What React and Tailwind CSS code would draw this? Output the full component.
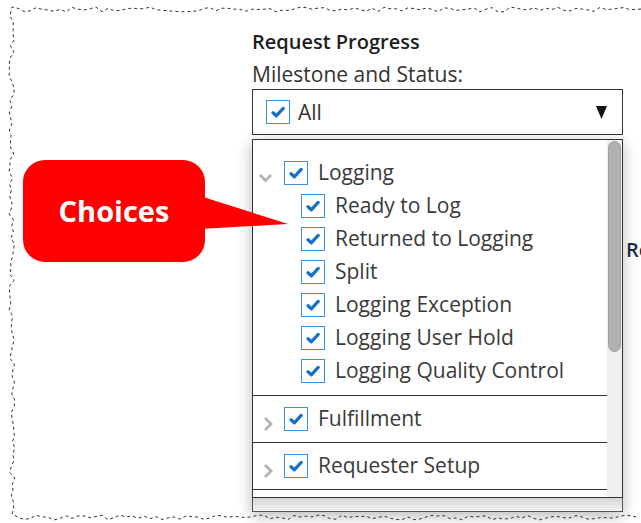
import React from "react";

// torn paper edge around the capture: jittered dashed line
function tornPath() {
  let seed = 7;
  const rnd = () => {
    seed = (seed * 9301 + 49297) % 233280;
    return seed / 233280;
  };
  let d = "M 641 9";
  for (let x = 636; x >= 12; x -= 6) d += ` L ${x} ${7 + rnd() * 5}`;
  for (let y = 16; y <= 514; y += 6) d += ` L ${9 + rnd() * 6} ${y}`;
  for (let x = 18; x <= 641; x += 6) d += ` L ${x} ${515 + rnd() * 5}`;
  return d;
}

function Check({ className = "" }) {
  return (
    <span className={`flex h-[24px] w-[24px] shrink-0 items-center justify-center border-[1.5px] border-[#3b90da] bg-white ${className}`}>
      <svg width="14" height="12" viewBox="0 0 14 12">
        <path d="M2 6.8 L5.3 9.8 L12.2 2.4" fill="none" stroke="#1570c8" strokeWidth="3.2" strokeLinecap="round" strokeLinejoin="round" />
      </svg>
    </span>
  );
}

function ChevronDown() {
  return (
    <svg width="15" height="10" viewBox="0 0 15 10" className="mt-[10px]">
      <path d="M2 2 L7.5 7.5 L13 2" fill="none" stroke="#b3b3b3" strokeWidth="2.8" />
    </svg>
  );
}

function ChevronRight() {
  return (
    <svg width="10" height="16" viewBox="0 0 10 16" className="mt-[9px]">
      <path d="M2 2 L8 8 L2 14" fill="none" stroke="#b3b3b3" strokeWidth="2.8" />
    </svg>
  );
}

const logging = [
  "Ready to Log",
  "Returned to Logging",
  "Split",
  "Logging Exception",
  "Logging User Hold",
  "Logging Quality Control",
];

export default function App() {
  return (
    <div className="relative h-[523px] w-[641px] overflow-hidden bg-white font-['Open_Sans',sans-serif]">
      <div className="flex">
        <div className="w-[252px] shrink-0" />

        <div className="w-[371px] shrink-0 pt-[29px]">
          <div className="text-[20px] font-semibold leading-[26px] text-[#1e1e1e]">Request Progress</div>
          <div className="mt-[6px] text-[21px] leading-[26px] text-[#333]">Milestone and Status:</div>

          {/* select */}
          <div className="mt-[2px] flex h-[46px] items-center border-[1.5px] border-[#333] bg-white pl-[13px] pr-[15px]">
            <Check />
            <span className="ml-[8px] text-[21px] leading-none text-[#333]">All</span>
            <svg width="11" height="13" viewBox="0 0 11 13" className="ml-auto">
              <polygon points="0,0 11,0 5.5,13" fill="#111" />
            </svg>
          </div>

          {/* dropdown */}
          <div className="mt-[4px] shadow-[0_4px_14px_rgba(0,0,0,0.28)]">
            <div className="flex h-[359px] border-[1.5px] border-[#333] bg-white">
              <div className="flex-1 overflow-hidden whitespace-nowrap text-[21px] text-[#3a3a3a]">
                <div className="border-b border-[#333] pb-[8px] pt-[16px]">
                  <div className="flex h-[33px] items-center pl-[5px]">
                    <span className="flex w-[26px] justify-start"><ChevronDown /></span>
                    <Check />
                    <span className="ml-[10px]">Logging</span>
                  </div>
                  {logging.map((name) => (
                    <div key={name} className="flex h-[33px] items-center pl-[48px]">
                      <Check />
                      <span className="ml-[10px]">{name}</span>
                    </div>
                  ))}
                </div>
                {["Fulfillment", "Requester Setup"].map((name) => (
                  <div key={name} className="flex h-[47px] items-center border-b border-[#333] pl-[10px]">
                    <span className="flex w-[21px] justify-start"><ChevronRight /></span>
                    <Check />
                    <span className="ml-[10px]">{name}</span>
                  </div>
                ))}
              </div>
              <div className="w-[15px] shrink-0 bg-[#f0f0f0] pt-[1px]">
                <div className="mx-[1px] h-[211px] rounded-full border border-[#a0a0a0] bg-[#b1b1b1]" />
              </div>
            </div>
            <div className="h-[14px] border-x-[1.5px] border-b-[1.5px] border-[#555] bg-gradient-to-b from-[#d6d6d6] to-[#f3f3f3]" />
          </div>
        </div>

        <div className="flex-1 overflow-hidden pl-[3px] pt-[238px]">
          <div className="text-[20px] font-semibold leading-[24px] text-[#1b2a44]">Re</div>
        </div>
      </div>

      {/* callout */}
      <div className="absolute left-[23px] top-[160px] flex h-[102px] w-[182px] items-center justify-center rounded-[22px] bg-[#ff0000]">
        <span className="text-[29px] font-bold text-white">Choices</span>
      </div>
      <svg className="absolute left-0 top-0" width="641" height="523">
        <polygon points="200,196 288,224 200,229" fill="#ff0000" />
      </svg>

      <svg className="pointer-events-none absolute left-0 top-0" width="641" height="523">
        <path d={tornPath()} fill="none" stroke="#333" strokeWidth="1" strokeDasharray="3 3" />
      </svg>
    </div>
  );
}
